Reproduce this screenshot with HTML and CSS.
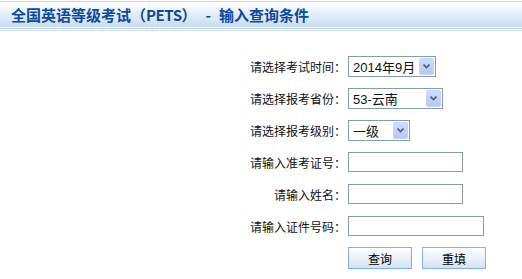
FILE: index.html
```html
<!DOCTYPE html>
<html lang="zh-CN">
<head>
    <meta charset="UTF-8">
    <title>全国英语等级考试（PETS） - 输入查询条件</title>
    <link rel="stylesheet" href="styles.css">
</head>
<body>
    <div class="page-head">全国英语等级考试（<span class="abbr">PETS</span>）<span class="sep">-</span>输入查询条件</div>
    <div class="rule"></div>

    <form class="query" onsubmit="return false;">
        <label>请选择考试时间：</label>
        <div class="combo w88">
            <span class="combo-text">2014年9月</span>
            <span class="drop"><svg width="7" height="5" viewBox="0 0 7 5"><path d="M0.5 0.5 L3.5 3.5 L6.5 0.5" fill="none" stroke="#4d6185" stroke-width="1.6"/></svg></span>
        </div>

        <label>请选择报考省份：</label>
        <div class="combo w95">
            <span class="combo-text">53-云南</span>
            <span class="drop"><svg width="7" height="5" viewBox="0 0 7 5"><path d="M0.5 0.5 L3.5 3.5 L6.5 0.5" fill="none" stroke="#4d6185" stroke-width="1.6"/></svg></span>
        </div>

        <label>请选择报考级别：</label>
        <div class="combo w62">
            <span class="combo-text">一级</span>
            <span class="drop"><svg width="7" height="5" viewBox="0 0 7 5"><path d="M0.5 0.5 L3.5 3.5 L6.5 0.5" fill="none" stroke="#4d6185" stroke-width="1.6"/></svg></span>
        </div>

        <label for="zkz">请输入准考证号：</label>
        <div><input type="text" id="zkz" class="field"></div>

        <label for="xm">请输入姓名：</label>
        <div><input type="text" id="xm" class="field"></div>

        <label for="zjh">请输入证件号码：</label>
        <div><input type="text" id="zjh" class="field wide"></div>

        <span></span>
        <div class="actions">
            <button type="submit" class="btn">查询</button>
            <button type="reset" class="btn">重填</button>
        </div>
    </form>
</body>
</html>
```

FILE: styles.css
```css
* {
    box-sizing: border-box;
}
body {
    margin: 0;
    font-family: "Liberation Sans", "Noto Sans CJK SC", sans-serif;
    color: #222;
    background: #fff;
}
.page-head {
    margin-top: 1px;
    height: 26px;
    border-top: 1px solid #c6d9ec;
    background: linear-gradient(#ffffff, #c8dbef);
    padding-left: 11px;
    line-height: 25px;
    font-family: "Noto Sans CJK SC", sans-serif;
    font-size: 15px;
    font-weight: bold;
    color: #0b4b9d;
    white-space: nowrap;
}
.page-head .abbr {
    letter-spacing: -0.5px;
}
.page-head .sep {
    margin: 0 8px 0 9px;
}
.rule {
    margin-top: 1px;
    height: 3px;
    border-top: 1px solid #b9d0e8;
    border-bottom: 1px solid #cfdff0;
}
.query {
    display: grid;
    grid-template-columns: 346px auto;
    grid-auto-rows: 32px;
    column-gap: 2px;
    align-items: center;
    margin-top: 19px;
}
.query label {
    text-align: right;
    font-size: 12px;
    font-family: "Noto Sans CJK SC", sans-serif;
    color: #111;
}
.combo {
    display: flex;
    align-items: center;
    height: 21px;
    border: 1px solid #7f9db9;
    background: #fff;
    font-size: 13px;
    color: #111;
}
.w88 { width: 88px; }
.w95 { width: 95px; }
.w62 { width: 62px; }
.combo-text {
    flex: 1;
    padding-left: 4px;
    white-space: nowrap;
}
.drop {
    display: flex;
    align-items: center;
    justify-content: center;
    width: 15px;
    height: 17px;
    margin-right: 1px;
    border: 1px solid #c3d3f5;
    border-radius: 2px;
    background: linear-gradient(#cfdcfb, #b4c8f4);
}
.field {
    display: block;
    width: 115px;
    height: 20px;
    margin: 0;
    border: 1px solid #7f9db9;
    padding: 0 3px;
    font-size: 12px;
}
.field.wide {
    width: 136px;
}
.actions {
    display: flex;
    gap: 10px;
}
.btn {
    width: 64px;
    height: 22px;
    margin: 0;
    padding: 0;
    border: 1px solid #7db2e8;
    background: linear-gradient(#ffffff, #d3e3f5);
    font-family: "Noto Sans CJK SC", sans-serif;
    font-size: 12px;
    color: #000;
    cursor: pointer;
}
```
